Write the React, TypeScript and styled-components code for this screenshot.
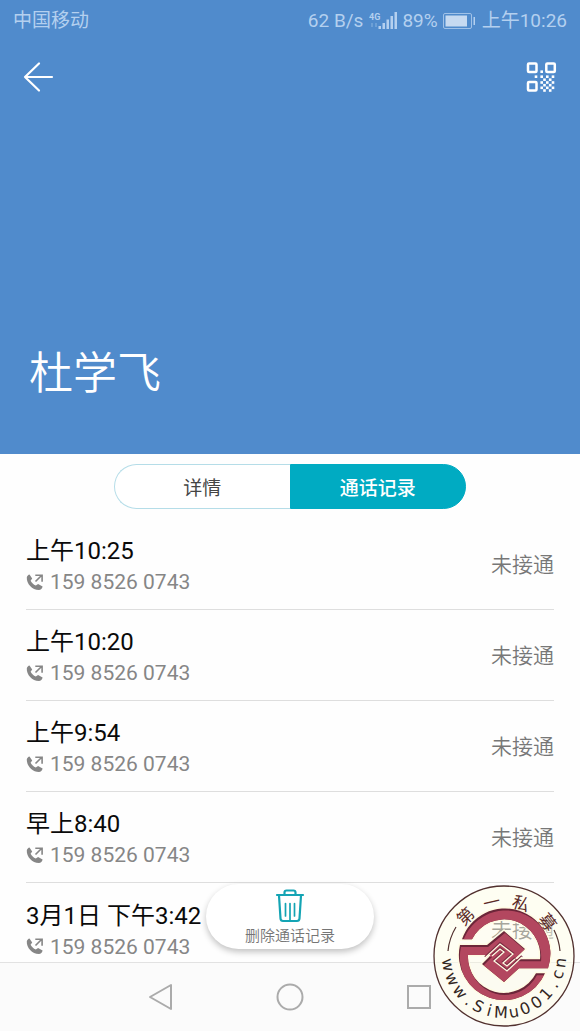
import React from "react";
import styled, { createGlobalStyle } from "styled-components";

const GlobalStyle = createGlobalStyle`
  * { box-sizing: border-box; }
  body { margin: 0; background: #fefefe; }
  body, button { font-family: Roboto, "Noto Sans CJK SC", sans-serif; }
  svg { display: block; }
`;

const Screen = styled.div`
  position: relative;
  display: flex;
  flex-direction: column;
  min-height: 100vh;
  overflow: hidden;
  background: #fefefe;
`;

const Hero = styled.header`
  display: flex;
  flex-direction: column;
  height: 454px;
  background: #508bcc;
  color: #fff;
`;

const StatusBar = styled.div`
  display: flex;
  justify-content: space-between;
  align-items: center;
  height: 40px;
  padding: 2px 13px 0;
  font-size: 19px;
  line-height: 28px;
  color: #b4d0ef;
`;

const StatusGroup = styled.div`
  display: flex;
  align-items: center;
`;

const StatusIcon = styled.svg<{ $before: number; $after: number }>`
  margin-left: ${(p) => p.$before}px;
  margin-right: ${(p) => p.$after}px;
`;

const ActionBar = styled.div`
  display: flex;
  justify-content: space-between;
  align-items: center;
  height: 74px;
  padding: 0 23px;
`;

const IconButton = styled.button`
  padding: 0;
  border: 0;
  background: none;
  color: inherit;
`;

const ContactName = styled.h1`
  margin: auto 29px 47px;
  font-size: 44px;
  line-height: 66px;
  font-weight: 350;
`;

const Tabs = styled.div`
  display: flex;
  width: 352px;
  max-width: 100%;
  height: 45px;
  margin: 10px auto;
`;

const Tab = styled.button<{ $active?: boolean }>`
  flex: 1;
  padding: 5px 0 0;
  border: 1px solid ${(p) => (p.$active ? "#00abc2" : "#b5dde8")};
  border-right-width: ${(p) => (p.$active ? "1px" : "0")};
  border-radius: ${(p) => (p.$active ? "0 23px 23px 0" : "23px 0 0 23px")};
  background: ${(p) => (p.$active ? "#00abc2" : "#fff")};
  color: ${(p) => (p.$active ? "#fff" : "#444")};
  font-size: 19px;
  line-height: 28px;
  font-weight: ${(p) => (p.$active ? 500 : 400)};
`;

const Main = styled.main`
  position: relative;
  flex: 1;
`;

const CallList = styled.ul`
  margin: 0;
  padding: 0 26px;
  list-style: none;
`;

const CallRow = styled.li`
  display: flex;
  align-items: center;
  justify-content: space-between;
  height: 91px;
  padding-top: 2px;
  border-bottom: 1px solid #dedede;
  color: #868686;
  font-size: 21px;

  &:last-child {
    height: 79px;
    padding-top: 14px;
    border-bottom: 0;
  }
`;

const CallTime = styled.div`
  font-size: 24px;
  line-height: 34px;
  color: #0a0a0a;
`;

const CallNumber = styled.div`
  display: flex;
  align-items: center;
  gap: 6px;
  line-height: 28px;
`;

const CallStatus = styled.span`
  line-height: 30px;
  font-weight: 350;
  color: #777;
`;

const DeleteButton = styled.button`
  position: absolute;
  left: 50%;
  bottom: 13px;
  transform: translateX(-50%);
  display: flex;
  flex-direction: column;
  align-items: center;
  gap: 2px;
  width: 168px;
  height: 65px;
  padding: 5px 0 0;
  border: 0;
  border-radius: 33px;
  background: #fff;
  box-shadow: 0 3px 6px rgba(0, 0, 0, 0.24);
  color: #757575;
  font-size: 15px;
  line-height: 22px;
  font-weight: 350;
`;

const NavBar = styled.nav`
  display: flex;
  justify-content: center;
  align-items: center;
  gap: 97px;
  height: 69px;
  border-top: 1px solid #e2e2e2;
  background: #fbfbfb;
  color: #ababab;
`;

const Seal = styled.svg`
  position: absolute;
  right: 5px;
  bottom: 4px;
`;

const SignalIcon = () => (
  <StatusIcon $before={6} $after={3} width="30" height="20" viewBox="0 0 30 20" fill="currentColor">
    <text x="0" y="9" fontSize="9" fontWeight="700" fontFamily="Roboto, sans-serif">4G</text>
    <path d="M2 12h2v4H2zM6 12h2v4H6z" opacity=".3" />
    <path d="M9.500 15h2.500v3H9.500zM13.500 12H16v6h-2.500zM17.500 8.500H20V18h-2.500zM21.500 5H24v13h-2.500zM25.500 1H28v17h-2.500z" />
  </StatusIcon>
);

const BatteryIcon = () => (
  <StatusIcon $before={5} $after={6} width="33" height="16" viewBox="0 0 33 16">
    <rect x=".5" y=".5" width="28" height="15" rx="1.500" fill="none" stroke="currentColor" opacity=".8" />
    <path d="M2.500 2.500H24v11H2.500z" fill="#c6daf1" />
    <path d="M30.500 4h1.500v8h-1.500z" fill="currentColor" />
  </StatusIcon>
);

const BackIcon = () => (
  <svg width="32" height="32" viewBox="0 0 32 32" fill="none" stroke="currentColor" strokeWidth="2.200" strokeLinecap="round" strokeLinejoin="round">
    <path d="M29 16H2M16 2.500 2 16l14 13.500" />
  </svg>
);

const QR_ROWS = [
  { y: 9.7, xs: [15.7] },
  { y: 14.7, xs: [10, 15.7, 21.3, 27] },
  { y: 17.7, xs: [18.5, 24.2] },
  { y: 20.5, xs: [15.7, 21.3, 27] },
  { y: 23.2, xs: [18.5, 24.2] },
  { y: 25.8, xs: [15.7, 21.3, 27] },
  { y: 28.5, xs: [18.5, 24.2] },
];

const QrIcon = () => (
  <svg width="31" height="30" viewBox="0 0 31 30" fill="none" stroke="currentColor" strokeWidth="2.500">
    <rect x="2" y="1.500" width="8.500" height="8.500" rx="1" />
    <rect x="20.300" y="1.500" width="8.500" height="8.500" rx="1" />
    <rect x="2" y="20" width="8.500" height="8.500" rx="1" />
    <g fill="currentColor" stroke="none">
      {QR_ROWS.flatMap(({ y, xs }) =>
        xs.map((x) => <rect key={`${x}-${y}`} x={x - 1.3} y={y - 1.3} width="2.600" height="2.600" />)
      )}
    </g>
  </svg>
);

const OutgoingIcon = () => (
  <svg width="18" height="17" viewBox="0 0 18 17" fill="none" stroke="currentColor">
    <path d="M.8 3.200C1.200 1.800 2.300.7 3.500.5L6.200 4.500 4.600 6.800c1.200 2.200 2.800 3.700 5.200 4.800l2.300-1.500 4.500 2.500c-.2 1.900-1.900 3.400-3.700 3.500C6.200 16 .4 9.700.8 3.200Z" fill="currentColor" stroke="none" />
    <path d="m9.500 7.500 6-6M9.300 1.300h6.800v6.500" strokeWidth="1.600" />
  </svg>
);

const TrashIcon = () => (
  <svg width="30" height="34" viewBox="0 0 30 34" fill="none" stroke="#14a4b4" strokeWidth="2.200" strokeLinecap="round" strokeLinejoin="round">
    <path d="M2 6h26M9.500 6V3.500q0-2 2-2h7q2 0 2 2V6" />
    <path d="M4 6.500 5.500 29.500q.2 2.500 2.500 2.500h14q2.300 0 2.500-2.500L26 6.500" />
    <path d="M10.500 14.500V27M15 14.500V32M19.500 14.500V27" strokeWidth="1.700" />
  </svg>
);

const TOP_CHARS = [
  { char: "第", angle: -44 },
  { char: "一", angle: -13 },
  { char: "私", angle: 18 },
  { char: "募", angle: 52 },
];

const BOTTOM_CHARS = "www.SiMu001.cn".split("");
const BOTTOM_ANGLES = [81, 66, 51, 38, 27, 15, 3, -10, -22, -35, -48, -60, -71, -83];

const EMBLEM =
  "M-42-16.700A45 45 0 0 1 44 12.300H15L0 26-22 8-13-1H-36A36 36 0 0 0 32 17.300H41A45 45 0 0 1-44-11H-17L0-25 21-7 10 3.300H36A36 36 0 0 0-32-16.700Z";

const SealLogo = () => (
  <Seal width="142" height="142" viewBox="-71 -71 142 142" role="img" aria-label="第一私募 www.SiMu001.cn">
    <defs>
      <clipPath id="emblem">
        <path d={EMBLEM} />
      </clipPath>
    </defs>
    <circle r="70" fill="#fffbdf" fillOpacity=".35" />
    <circle r="57" fill="none" stroke="#fffef2" strokeWidth="25" strokeOpacity=".35" />
    <circle r="70" fill="none" stroke="#51302e" strokeWidth="1.300" />
    <path d="M-56-5A56 56 0 0 1-48-29M56-5A56 56 0 0 0 50-26" fill="none" stroke="#51302e" strokeWidth="1.200" />
    <path d={EMBLEM} fill="#6c2639" stroke="#fffbe3" strokeWidth="3" paintOrder="stroke" />
    <g clipPath="url(#emblem)">
      <path d={EMBLEM} fill="#b3475f" transform="translate(1 2)" />
    </g>
    <g fill="none" strokeLinejoin="miter">
      <path d="M-19 1-4-13 9-3-1 6 3 9 11 2M18 0 3 14-10 4 0-5-4-8-12-1" stroke="#7a2c41" strokeWidth="2" />
      <path d="M-19 2-4-12 9-2-1 7 3 10 11 3M18 1 3 15-10 5 0-4-4-7-12 0" stroke="#fffbe3" strokeWidth="1.300" />
    </g>
    <g fill="#5b2a27" textAnchor="middle" fontSize="17" fontFamily='"Noto Sans CJK SC", sans-serif'>
      {TOP_CHARS.map(({ char, angle }) => (
        <text key={char} transform={`rotate(${angle})`} y="-49">{char}</text>
      ))}
    </g>
    <g fill="#33261f" textAnchor="middle" fontSize="16" fontFamily='"DejaVu Sans", sans-serif'>
      {BOTTOM_CHARS.map((char, i) => (
        <text key={i} transform={`rotate(${BOTTOM_ANGLES[i]})`} y="62">{char}</text>
      ))}
    </g>
  </Seal>
);

const CALLS = ["上午10:25", "上午10:20", "上午9:54", "早上8:40", "3月1日 下午3:42"];

export default function App() {
  return (
    <Screen>
      <GlobalStyle />
      <Hero>
        <StatusBar>
          <span>中国移动</span>
          <StatusGroup>
            <span>62 B/s</span>
            <SignalIcon />
            <span>89%</span>
            <BatteryIcon />
            <span>上午10:26</span>
          </StatusGroup>
        </StatusBar>
        <ActionBar>
          <IconButton aria-label="返回"><BackIcon /></IconButton>
          <IconButton aria-label="二维码"><QrIcon /></IconButton>
        </ActionBar>
        <ContactName>杜学飞</ContactName>
      </Hero>
      <Tabs>
        <Tab>详情</Tab>
        <Tab $active>通话记录</Tab>
      </Tabs>
      <Main>
        <CallList>
          {CALLS.map((time) => (
            <CallRow key={time}>
              <div>
                <CallTime>{time}</CallTime>
                <CallNumber><OutgoingIcon />159 8526 0743</CallNumber>
              </div>
              <CallStatus>未接通</CallStatus>
            </CallRow>
          ))}
        </CallList>
        <DeleteButton>
          <TrashIcon />
          删除通话记录
        </DeleteButton>
      </Main>
      <NavBar>
        <IconButton aria-label="后退">
          <svg width="32" height="32" viewBox="0 0 32 32" fill="none" stroke="currentColor" strokeWidth="2" strokeLinejoin="round">
            <path d="M26 4v24L5 16Z" />
          </svg>
        </IconButton>
        <IconButton aria-label="主屏幕">
          <svg width="32" height="32" viewBox="0 0 32 32" fill="none" stroke="currentColor" strokeWidth="2">
            <circle cx="16" cy="16" r="12.500" />
          </svg>
        </IconButton>
        <IconButton aria-label="最近任务">
          <svg width="32" height="32" viewBox="0 0 32 32" fill="none" stroke="currentColor" strokeWidth="2">
            <rect x="5" y="5" width="22" height="22" />
          </svg>
        </IconButton>
      </NavBar>
      <SealLogo />
    </Screen>
  );
}
